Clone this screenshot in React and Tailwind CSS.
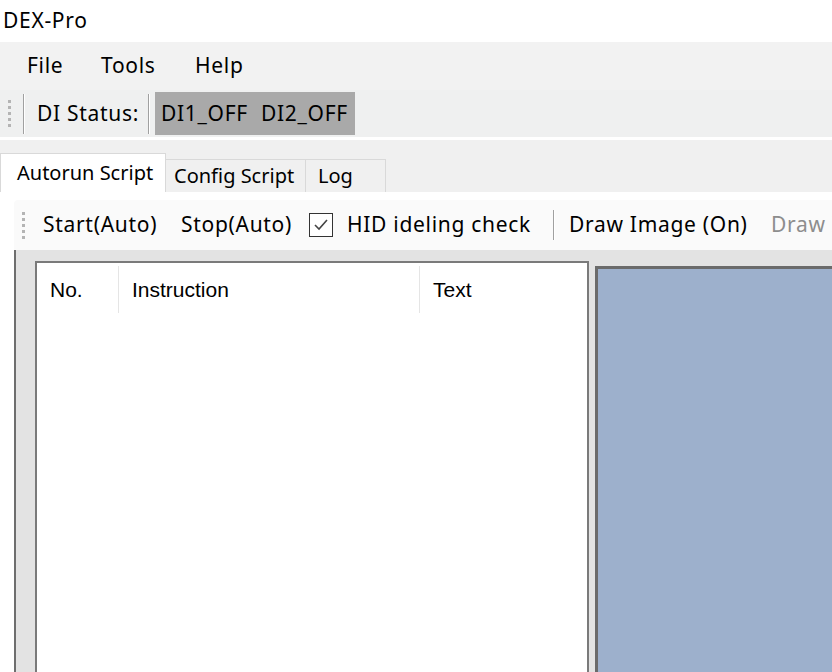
import { useState } from 'react';

const Grip = ({ className = '' }) => (
  <div className={`flex flex-col gap-[3px] ${className}`}>
    {[0, 1, 2, 3, 4].map((i) => (
      <div key={i} className="w-[3px] h-[3px] bg-[#b4b4b4]" />
    ))}
  </div>
);

const Sep = ({ className = '' }) => (
  <div className={`w-[2px] border-l border-[#a0a0a0] border-r border-r-white ${className}`} />
);

const App = () => {
  const [hidCheck, setHidCheck] = useState(true);

  return (
    <div className="w-[832px] h-[672px] overflow-hidden bg-[#f0f0f0] text-black font-['Noto_Sans',sans-serif] text-[21px] tracking-[0.7px] flex flex-col">
      {/* title */}
      <div className="h-[42px] bg-white flex items-center px-[3px] shrink-0">DEX-Pro</div>

      {/* menu */}
      <div className="h-[48px] bg-[#f2f2f2] flex items-center shrink-0 pl-[27px] whitespace-nowrap">
        <span className="w-[74px]">File</span>
        <span className="w-[94px]">Tools</span>
        <span>Help</span>
      </div>

      {/* DI status strip */}
      <div className="h-[47px] bg-[#eff0f0] flex items-center shrink-0 whitespace-nowrap">
        <Grip className="ml-[8px]" />
        <Sep className="h-[40px] ml-[12px]" />
        <span className="ml-[12px] w-[111px]">DI Status:</span>
        <Sep className="h-[40px]" />
        <div className="ml-[5px] h-[43px] w-[200px] bg-[#a9a9a9] flex items-center pl-[6px]">
          <span className="w-[100px]">DI1_OFF</span>
          <span>DI2_OFF</span>
        </div>
      </div>
      <div className="h-[3px] bg-white shrink-0" />

      {/* tabs */}
      <div className="flex items-end h-[52px] shrink-0 text-[20px] tracking-normal">
        <div className="h-[39px] w-[166px] bg-white border border-b-0 border-[#d9d9d9] flex items-center pl-[16px]">
          Autorun Script
        </div>
        <div className="h-[33px] w-[140px] bg-[#f0f0f0] border border-l-0 border-b-0 border-[#d9d9d9] flex items-center pl-[8px]">
          Config Script
        </div>
        <div className="h-[33px] w-[80px] bg-[#f0f0f0] border border-l-0 border-b-0 border-[#d9d9d9] flex items-center pl-[12px]">
          Log
        </div>
      </div>

      {/* tab page */}
      <div className="flex-1 bg-white flex flex-col pt-[8px] min-h-0">
        <div className="ml-[14px] h-[50px] bg-[#fafafa] rounded-tl-[4px] flex items-center shrink-0 whitespace-nowrap overflow-hidden">
          <Grip className="ml-[8px]" />
          <span className="ml-[18px] w-[138px] shrink-0">Start(Auto)</span>
          <span className="w-[128px] shrink-0">Stop(Auto)</span>
          <button
            onClick={() => setHidCheck(!hidCheck)}
            className="shrink-0 w-[24px] h-[24px] border border-[#333] bg-white flex items-center justify-center"
          >
            {hidCheck && (
              <svg width="18" height="18" viewBox="0 0 18 18">
                <path d="M3 9 L7 13 L15 4" fill="none" stroke="#444" strokeWidth="1.6" />
              </svg>
            )}
          </button>
          <span className="ml-[14px] w-[206px] shrink-0">HID ideling check</span>
          <Sep className="h-[30px] shrink-0" />
          <span className="ml-[14px] w-[202px] shrink-0">Draw Image (On)</span>
          <span className="text-[#8d8d8d] shrink-0">Draw Image (Off)</span>
        </div>

        <div className="flex-1 ml-[14px] border-l-2 border-[#6e6e6e] bg-[#e3e3e3] flex pt-[11px] pl-[19px] gap-[6px] min-h-0">
          {/* list view */}
          <div className="w-[554px] bg-white border-2 border-[#7a7a7a] border-b-0 font-['Liberation_Sans',sans-serif] text-[21px] tracking-normal">
            <div className="h-[50px] pt-[3px] flex items-center">
              <div className="w-[82px] h-full flex items-center pl-[13px] border-r border-[#e5e5e5]">No.</div>
              <div className="w-[301px] h-full flex items-center pl-[13px] border-r border-[#e5e5e5]">Instruction</div>
              <div className="flex-1 h-full flex items-center pl-[13px]">Text</div>
            </div>
          </div>
          {/* picture box */}
          <div className="flex-1 mt-[5px] bg-[#9db0cc] border-l-[3px] border-t-[3px] border-[#6b6b6b]" />
        </div>
      </div>
    </div>
  );
};

export default App;
